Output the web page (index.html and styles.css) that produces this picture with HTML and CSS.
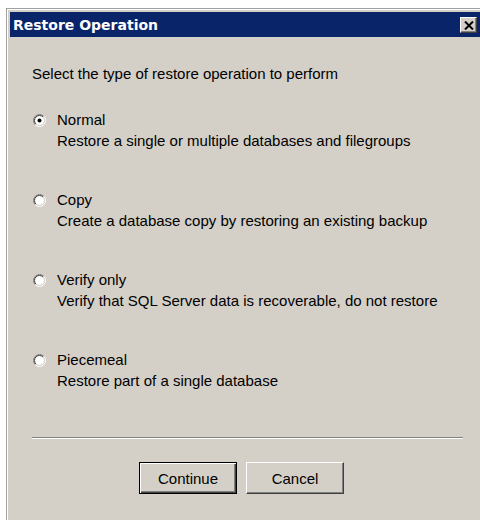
FILE: index.html
```html
<!DOCTYPE html>
<html lang="en">
<head>
<meta charset="utf-8">
<title>Restore Operation</title>
<link rel="stylesheet" href="styles.css">
</head>
<body>
<div class="window">
  <div class="titlebar">
    <span class="title">Restore Operation</span>
    <span class="close" aria-label="Close">
      <svg width="10" height="9" viewBox="0 0 10 9"><path d="M1 0.5 L9 8.5 M9 0.5 L1 8.5" stroke="#000" stroke-width="2" fill="none"/></svg>
    </span>
  </div>
  <div class="content">
    <p class="prompt">Select the type of restore operation to perform</p>
    <div class="options">
      <div class="option">
        <svg class="radio" width="13" height="13" viewBox="0 0 13 13">
          <circle cx="6.5" cy="6.5" r="5" fill="#fff"/>
          <path d="M2.257 10.743 A6 6 0 0 1 10.743 2.257" stroke="#808080" fill="none"/>
          <path d="M10.743 2.257 A6 6 0 0 1 2.257 10.743" stroke="#fff" fill="none"/>
          <path d="M2.964 10.036 A5 5 0 0 1 10.036 2.964" stroke="#404040" fill="none"/>
          <path d="M10.036 2.964 A5 5 0 0 1 2.964 10.036" stroke="#d4d0c8" fill="none"/>
          <circle cx="6.5" cy="6.5" r="2" fill="#000"/>
        </svg>
        <span class="label">Normal</span>
        <span class="desc">Restore a single or multiple databases and filegroups</span>
      </div>
      <div class="option">
        <svg class="radio" width="13" height="13" viewBox="0 0 13 13">
          <circle cx="6.5" cy="6.5" r="5" fill="#fff"/>
          <path d="M2.257 10.743 A6 6 0 0 1 10.743 2.257" stroke="#808080" fill="none"/>
          <path d="M10.743 2.257 A6 6 0 0 1 2.257 10.743" stroke="#fff" fill="none"/>
          <path d="M2.964 10.036 A5 5 0 0 1 10.036 2.964" stroke="#404040" fill="none"/>
          <path d="M10.036 2.964 A5 5 0 0 1 2.964 10.036" stroke="#d4d0c8" fill="none"/>
        </svg>
        <span class="label">Copy</span>
        <span class="desc">Create a database copy by restoring an existing backup</span>
      </div>
      <div class="option">
        <svg class="radio" width="13" height="13" viewBox="0 0 13 13">
          <circle cx="6.5" cy="6.5" r="5" fill="#fff"/>
          <path d="M2.257 10.743 A6 6 0 0 1 10.743 2.257" stroke="#808080" fill="none"/>
          <path d="M10.743 2.257 A6 6 0 0 1 2.257 10.743" stroke="#fff" fill="none"/>
          <path d="M2.964 10.036 A5 5 0 0 1 10.036 2.964" stroke="#404040" fill="none"/>
          <path d="M10.036 2.964 A5 5 0 0 1 2.964 10.036" stroke="#d4d0c8" fill="none"/>
        </svg>
        <span class="label">Verify only</span>
        <span class="desc">Verify that SQL Server data is recoverable, do not restore</span>
      </div>
      <div class="option">
        <svg class="radio" width="13" height="13" viewBox="0 0 13 13">
          <circle cx="6.5" cy="6.5" r="5" fill="#fff"/>
          <path d="M2.257 10.743 A6 6 0 0 1 10.743 2.257" stroke="#808080" fill="none"/>
          <path d="M10.743 2.257 A6 6 0 0 1 2.257 10.743" stroke="#fff" fill="none"/>
          <path d="M2.964 10.036 A5 5 0 0 1 10.036 2.964" stroke="#404040" fill="none"/>
          <path d="M10.036 2.964 A5 5 0 0 1 2.964 10.036" stroke="#d4d0c8" fill="none"/>
        </svg>
        <span class="label">Piecemeal</span>
        <span class="desc">Restore part of a single database</span>
      </div>
    </div>
    <div class="separator"></div>
    <div class="buttons">
      <button class="btn btn-default" type="button">Continue</button>
      <button class="btn" type="button">Cancel</button>
    </div>
  </div>
</div>
</body>
</html>
```
FILE: styles.css
```css
html, body {
  margin: 0;
  height: 520px;
  overflow: hidden;
  background: #fff;
}

body {
  font-family: "Liberation Sans", Arial, sans-serif;
  color: #000;
}

/* classic dialog frame; it runs past the right and bottom edges */
.window {
  margin: 8px 0 0 6px;
  width: 470px;
  height: 520px;
  padding: 3px 0 0 3px;
  border-top: 1px solid #a0a0a0;
  border-left: 1px solid #a0a0a0;
  background: #d4d0c8;
  box-shadow: inset 1px 1px #fff;
}

.titlebar {
  height: 25px;
  padding: 0 3px;
  display: flex;
  align-items: center;
  justify-content: space-between;
  background: #0a246a;
  color: #fff;
}

.title {
  font-family: "DejaVu Sans", Verdana, sans-serif;
  font-weight: bold;
  font-size: 14px;
  line-height: 25px;
  padding-top: 2px;
}

.close {
  width: 17px;
  height: 16px;
  box-sizing: border-box;
  margin-top: 1px;
  display: flex;
  align-items: center;
  justify-content: center;
  background: #d4d0c8;
  border: 1px solid;
  border-color: #fff #404040 #404040 #fff;
  box-shadow: inset -1px -1px #808080;
}

.content {
  padding: 26px 0 0 22px;
  font-size: 15px;
  line-height: 21px;
}

.prompt {
  margin: 0;
}

.options {
  margin-top: 25px;
  display: flex;
  flex-direction: column;
  gap: 38px;
}

.option {
  display: grid;
  grid-template-columns: 13px auto;
  column-gap: 11px;
  margin-left: 1px;
}

.radio {
  grid-row: 1;
  grid-column: 1;
  margin-top: 5px;
  display: block;
}

.label {
  grid-row: 1;
  grid-column: 2;
}

.desc {
  grid-row: 2;
  grid-column: 2;
}

.separator {
  margin-top: 46px;
  width: 431px;
  border-top: 1px solid #808080;
  border-bottom: 1px solid #fff;
}

.buttons {
  margin-top: 23px;
  padding-left: 107px;
  display: flex;
  gap: 9px;
}

.btn {
  width: 98px;
  height: 32px;
  padding: 0;
  margin: 0;
  font-family: "Liberation Sans", Arial, sans-serif;
  font-size: 15px;
  color: #000;
  background: #d4d0c8;
  border: 1px solid;
  border-color: #fff #404040 #404040 #fff;
  box-shadow: inset -1px -1px #808080;
  border-radius: 0;
}

.btn-default {
  border: 1px solid #000;
  box-shadow: inset 1px 1px #fff, inset -1px -1px #404040, inset -2px -2px #808080;
}
```
